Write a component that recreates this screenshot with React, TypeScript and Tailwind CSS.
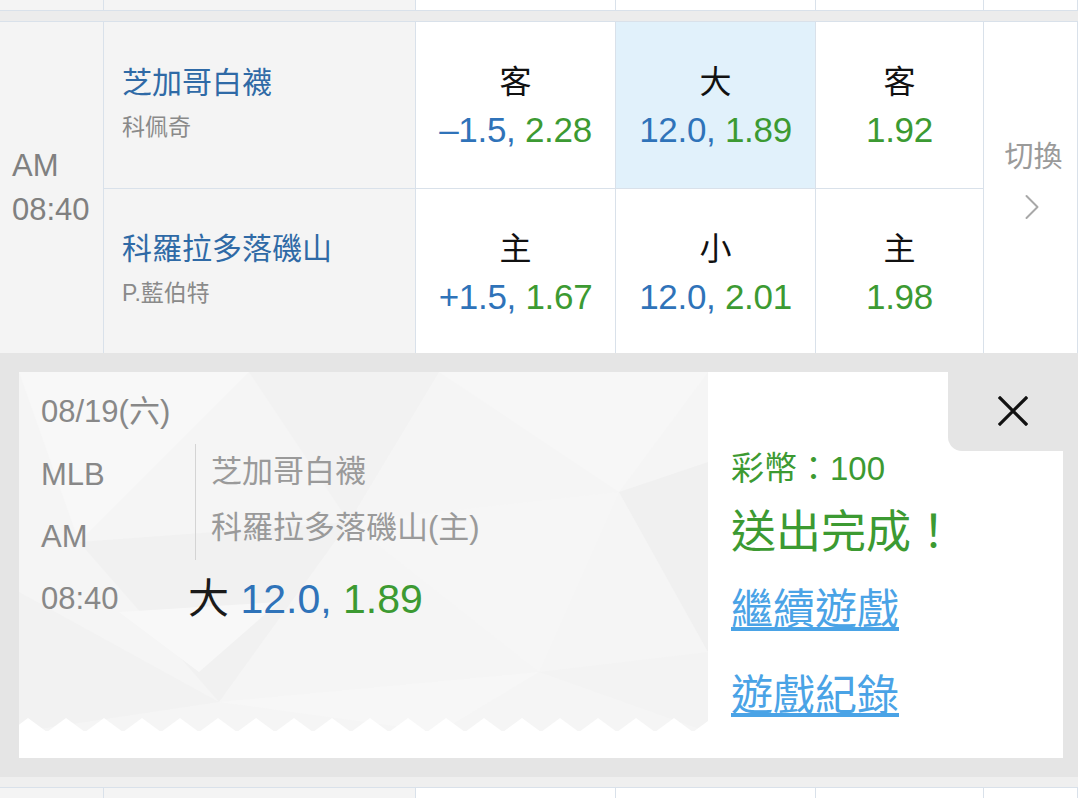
import { ChevronRight } from "lucide-react";

const BLUE = "text-[#2f73b9]";
const GREEN = "text-[#3c9a32]";
const LINE = "border-[#d9e1ea]";

type Pick = { label: string; line?: string; price: string; active?: boolean };

const rows: { team: string; pitcher: string; picks: Pick[] }[] = [
  {
    team: "芝加哥白襪",
    pitcher: "科佩奇",
    picks: [
      { label: "客", line: "–1.5", price: "2.28" },
      { label: "大", line: "12.0", price: "1.89", active: true },
      { label: "客", price: "1.92" },
    ],
  },
  {
    team: "科羅拉多落磯山",
    pitcher: "P.藍伯特",
    picks: [
      { label: "主", line: "+1.5", price: "1.67" },
      { label: "小", line: "12.0", price: "2.01" },
      { label: "主", price: "1.98" },
    ],
  },
];

const widths = ["w-[200px]", "w-[200px]", "w-[168px]"];

function PickCell({ pick, width }: { pick: Pick; width: string }) {
  return (
    <div
      className={`${width} border-r ${LINE} flex flex-col items-center pt-[38px] ${
        pick.active ? "bg-[#e1f1fb]" : "bg-white"
      }`}
    >
      <div className="text-[32px] leading-[44px] text-[#111]">{pick.label}</div>
      <div className="text-[35px] leading-[52px] tracking-[-0.3px]">
        {pick.line && <span className={BLUE}>{pick.line}, </span>}
        <span className={GREEN}>{pick.price}</span>
      </div>
    </div>
  );
}

function StubRow() {
  return (
    <div className={`flex h-[11px] border-b ${LINE}`}>
      <div className={`w-[104px] bg-[#f4f4f4] border-r ${LINE}`} />
      <div className={`w-[312px] bg-[#f4f4f4] border-r ${LINE}`} />
      <div className={`w-[200px] border-r ${LINE}`} />
      <div className={`w-[200px] border-r ${LINE}`} />
      <div className={`w-[168px] border-r ${LINE}`} />
      <div className={`w-[94px] border-r ${LINE}`} />
    </div>
  );
}

function PolyBackground() {
  const teeth = [];
  for (let x = -10; x < 700; x += 38) {
    teeth.push(`${x},360 ${x + 19},346 ${x + 38},360`);
  }
  return (
    <svg className="absolute inset-0" width="689" height="386" viewBox="0 0 689 386">
      <rect x="0" y="0" width="689" height="360" fill="#f5f5f5" />
      <polygon points="0,0 230,0 60,170" fill="#f8f8f8" />
      <polygon points="230,0 420,0 330,150" fill="#f2f2f2" />
      <polygon points="420,0 689,0 600,120" fill="#f7f7f7" />
      <polygon points="60,170 330,150 200,330" fill="#f1f1f1" />
      <polygon points="330,150 600,120 520,300" fill="#f6f6f6" />
      <polygon points="600,120 689,90 689,280" fill="#f0f0f0" />
      <polygon points="0,220 200,330 0,360" fill="#f2f2f2" />
      <polygon points="200,330 520,300 420,360" fill="#f7f7f7" />
      <polygon points="520,300 689,280 689,360" fill="#f3f3f3" />
      <polygon points="100,240 260,230 180,300" fill="#f8f8f8" />
      {teeth.map((p) => (
        <polygon key={p} points={p} fill="#ffffff" />
      ))}
      <rect x="0" y="359" width="689" height="27" fill="#ffffff" />
    </svg>
  );
}

export default function App() {
  return (
    <div className="w-[1080px] h-[798px] overflow-hidden bg-white [font-family:'Liberation_Sans','Noto_Sans_CJK_TC',sans-serif]">
      <div className="w-[1078px]">
        <StubRow />
        <div className={`h-[11px] bg-[#ececec] border-b ${LINE}`} />

        {/* match */}
        <div className="flex">
          <div
            className={`w-[104px] bg-[#f4f4f4] border-r ${LINE} flex flex-col justify-center pl-[12px] text-[31px] leading-[44px] text-[#808080]`}
          >
            <div>AM</div>
            <div>08:40</div>
          </div>
          <div className="flex flex-col">
            {rows.map((r, i) => (
              <div
                key={r.team}
                className={`flex ${i === 0 ? `h-[167px] border-b ${LINE}` : "h-[164px]"}`}
              >
                <div
                  className={`w-[312px] bg-[#f4f4f4] border-r ${LINE} pl-[18px] ${
                    i === 0 ? "pt-[41px]" : "pt-[40px]"
                  }`}
                >
                  <div className="text-[30px] leading-[40px] text-[#2f6aa6]">{r.team}</div>
                  <div className="text-[23px] leading-[48px] text-[#8a8a8a]">{r.pitcher}</div>
                </div>
                {r.picks.map((p, j) => (
                  <PickCell key={j} pick={p} width={widths[j]} />
                ))}
              </div>
            ))}
          </div>
          <div className={`w-[94px] border-r ${LINE} flex flex-col items-center pt-[115px]`}>
            <div className="text-[29px] leading-[40px] text-[#9a9a9a] pl-[6px]">切換</div>
            <ChevronRight className="mt-[8px] ml-[2px]" size={44} strokeWidth={1.1} color="#a8a8a8" />
          </div>
        </div>

        {/* confirmation popup */}
        <div className="h-[424px] bg-[#e5e5e5] pt-[19px] pl-[19px] pr-[15px]">
          <div className="flex h-[386px] bg-white">
            <div className="relative w-[689px] h-full">
              <PolyBackground />
              <div className="relative pl-[22px] pt-[20px]">
                <div className="text-[31px] leading-[40px] text-[#888]">08/19(六)</div>
                <div className="flex mt-[12px]">
                  <div className="w-[147px] text-[31px] leading-[62px] text-[#888]">
                    <div>MLB</div>
                    <div>AM</div>
                  </div>
                  <div className="ml-[7px] h-[116px] border-l border-[#d4d4d4] pl-[15px] text-[31px] leading-[56px] text-[#9a9a9a]">
                    <div>芝加哥白襪</div>
                    <div>科羅拉多落磯山(主)</div>
                  </div>
                </div>
                <div className="flex">
                  <div className="w-[147px] text-[31px] leading-[62px] text-[#888]">08:40</div>
                  <div className="text-[41px] leading-[62px]">
                    <span className="text-[#1a1a1a]">大 </span>
                    <span className={BLUE}>12.0, </span>
                    <span className={GREEN}>1.89</span>
                  </div>
                </div>
              </div>
            </div>
            <div className="relative flex-1 pl-[23px] pt-[73px]">
              <div className="absolute top-0 right-0 w-[115px] h-[79px] bg-[#e5e5e5] rounded-bl-[14px] flex justify-end pt-[24px] pr-[35px]">
                <svg width="30" height="30" viewBox="0 0 30 30">
                  <path d="M2 2 28 28 M28 2 2 28" stroke="#111" strokeWidth="3.2" strokeLinecap="square" />
                </svg>
              </div>
              <div className={`text-[33px] leading-[48px] ${GREEN}`}>彩幣：100</div>
              <div className={`text-[45px] leading-[80px] ${GREEN}`}>送出完成！</div>
              <div className="text-[42px] leading-[74px] text-[#4aa3e6] underline underline-offset-[3px]">
                繼續遊戲
              </div>
              <div className="text-[42px] leading-[98px] text-[#4aa3e6] underline underline-offset-[3px]">
                遊戲紀錄
              </div>
            </div>
          </div>
        </div>
        <div className={`h-[11px] bg-[#efefef] border-b ${LINE}`} />
        <StubRow />
      </div>
    </div>
  );
}
